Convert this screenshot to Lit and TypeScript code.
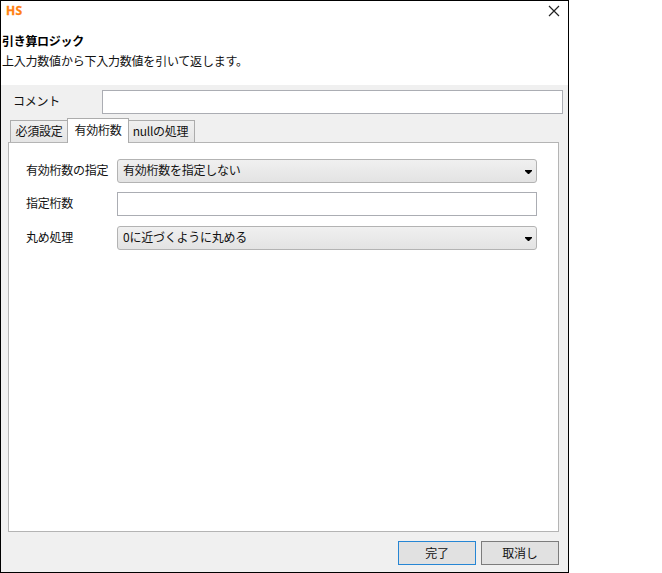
import { LitElement, html, css } from "lit";
import { customElement, property } from "lit/decorators.js";

@customElement("combo-box")
class ComboBox extends LitElement {
  @property() value = "";
  static styles = css`
    :host { display: block; }
    .box {
      box-sizing: border-box; height: 24px; padding: 0 5px 1px 5px;
      border: 1px solid #b3b3b3; border-radius: 3px;
      background: linear-gradient(#f0f0f0, #e3e3e3);
      display: flex; align-items: center; justify-content: space-between;
      line-height: 20px;
    }
    .value { margin-top: -1px; }
    svg { display: block; margin: 3px -1px 0 0; }
  `;
  render() {
    return html`<div class="box"><span class="value">${this.value}</span>
      <svg width="7" height="4" viewBox="0 0 7 4"><path d="M0 0H7V1L4 4H3L0 1Z" fill="#000" /></svg>
    </div>`;
  }
}

@customElement("app-root")
class AppRoot extends LitElement {
  static styles = css`
    :host { display: block; }
    * { box-sizing: border-box; }
    .page { height: 573px; background: #fff; overflow: hidden; }
    .window {
      width: 569px; height: 573px; border: 1px solid #000; background: #f0f0f0;
      font: 12px/20px "Noto Sans CJK JP", "Noto Sans", sans-serif;
      letter-spacing: -0.25px; color: #111; white-space: nowrap;
      display: flex; flex-direction: column;
    }
    .header { height: 84px; background: #fff; padding: 0 1px; flex: none; }
    .titlebar { height: 30px; display: flex; justify-content: space-between; padding: 4px 7px 0 4px; }
    .titlebar svg { display: block; }
    .logo {
      font: bold 12px/12px "Open Sans", "Noto Sans", sans-serif; color: #ff7f11;
      letter-spacing: 0.2px; -webkit-text-stroke: 0.3px #ff7f11;
    }
    .title { font-weight: bold; color: #000; letter-spacing: -0.3px; }
    .desc { letter-spacing: -0.22px; }
    .comment { display: flex; align-items: center; padding: 5px 5px 0 12px; }
    .comment .label { width: 89px; margin-top: -2px; }
    .field { flex: 1; height: 24px; border: 1px solid #abadb3; background: #fff; }
    .tabs { display: flex; align-items: flex-end; height: 28px; padding-left: 9px; flex: none; }
    .tab {
      height: 22px; border: 1px solid #acacac; border-bottom: 0;
      background: linear-gradient(#f0f0f0, #e5e5e5); line-height: 19px; text-align: center;
    }
    .required { width: 58px; }
    .digits { width: 62px; height: 25px; margin: 0 -1px -1px; background: #fff; position: relative; line-height: 21px; }
    .nulls { width: 67px; padding-right: 2px; }
    .panel {
      margin: 0 9px 0 7px; height: 390px; flex: none; border: 1px solid #b4b4b4; background: #fff;
      padding: 16px 21px 0 17px;
    }
    .form { display: grid; grid-template-columns: 91px 1fr; grid-template-rows: 24px 25px 24px; row-gap: 9px; }
    .form .label { line-height: 22px; }
    .actions { display: flex; justify-content: flex-end; gap: 5px; padding: 9px 9px 0 0; }
    .btn {
      width: 78px; height: 24px; border: 1px solid #7c7c7c; background: #e1e1e1;
      text-align: center; line-height: 21px;
    }
    .primary { border-color: #2686d4; }
  `;
  render() {
    return html`<div class="page"><div class="window">
      <div class="header">
        <div class="titlebar">
          <span class="logo">HS</span>
          <svg width="12" height="12" viewBox="0 0 12 12"><path d="M1 1L11 11M11 1L1 11" stroke="#222" stroke-width="1.2" fill="none" /></svg>
        </div>
        <div class="title">引き算ロジック</div>
        <div class="desc">上入力数値から下入力数値を引いて返します。</div>
      </div>
      <div class="comment"><span class="label">コメント</span><div class="field"></div></div>
      <div class="tabs">
        <div class="tab required">必須設定</div>
        <div class="tab digits">有効桁数</div>
        <div class="tab nulls">nullの処理</div>
      </div>
      <div class="panel"><div class="form">
        <span class="label">有効桁数の指定</span><combo-box value="有効桁数を指定しない"></combo-box>
        <span class="label">指定桁数</span><div class="field"></div>
        <span class="label">丸め処理</span><combo-box value="0に近づくように丸める"></combo-box>
      </div></div>
      <div class="actions">
        <div class="btn primary">完了</div>
        <div class="btn">取消し</div>
      </div>
    </div></div>`;
  }
}
